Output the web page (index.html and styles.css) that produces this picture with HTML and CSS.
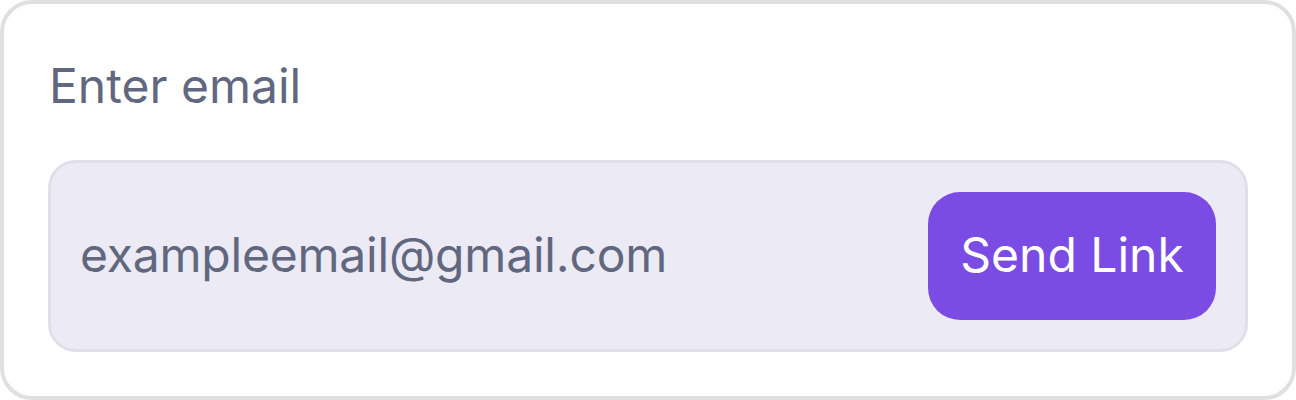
FILE: index.html
```html
<!DOCTYPE html>
<html>
<head>
<meta charset="utf-8">
<link rel="stylesheet" href="styles.css">
</head>
<body>
<div class="card">
  <div class="label">Enter email</div>
  <div class="field">
    <span class="value">exampleemail@gmail.com</span>
    <button class="send">Send Link</button>
  </div>
</div>
</body>
</html>
```
FILE: styles.css
```css
html, body { margin: 0; padding: 0; background: #ffffff; }
body { font-family: Inter, "Noto Sans", sans-serif; }
.card {
  box-sizing: border-box;
  width: 1296px;
  height: 400px;
  border: 4px solid #e0e0e0;
  border-radius: 32px;
  padding: 0 44px;
  display: flex;
  flex-direction: column;
}
.label {
  margin-top: 53px;
  padding-left: 1px;
  font-size: 48px;
  line-height: 58px;
  color: #61677f;
}
.field {
  margin-top: 45px;
  box-sizing: border-box;
  height: 192px;
  border: 3px solid #e1dfea;
  border-radius: 28px;
  background: #eceaf4;
  display: flex;
  align-items: center;
  justify-content: space-between;
  padding: 0 29px 0 29px;
}
.value {
  font-size: 48px;
  letter-spacing: -0.2px;
  line-height: 58px;
  margin-top: -3px;
  color: #61677f;
}
.send {
  width: 288px;
  height: 128px;
  border: none;
  border-radius: 32px;
  background: #7b4ce3;
  color: #ffffff;
  font-family: Inter, "Noto Sans", sans-serif;
  font-size: 48px;
  line-height: 58px;
  padding: 0 0 3px 0;
}
```
